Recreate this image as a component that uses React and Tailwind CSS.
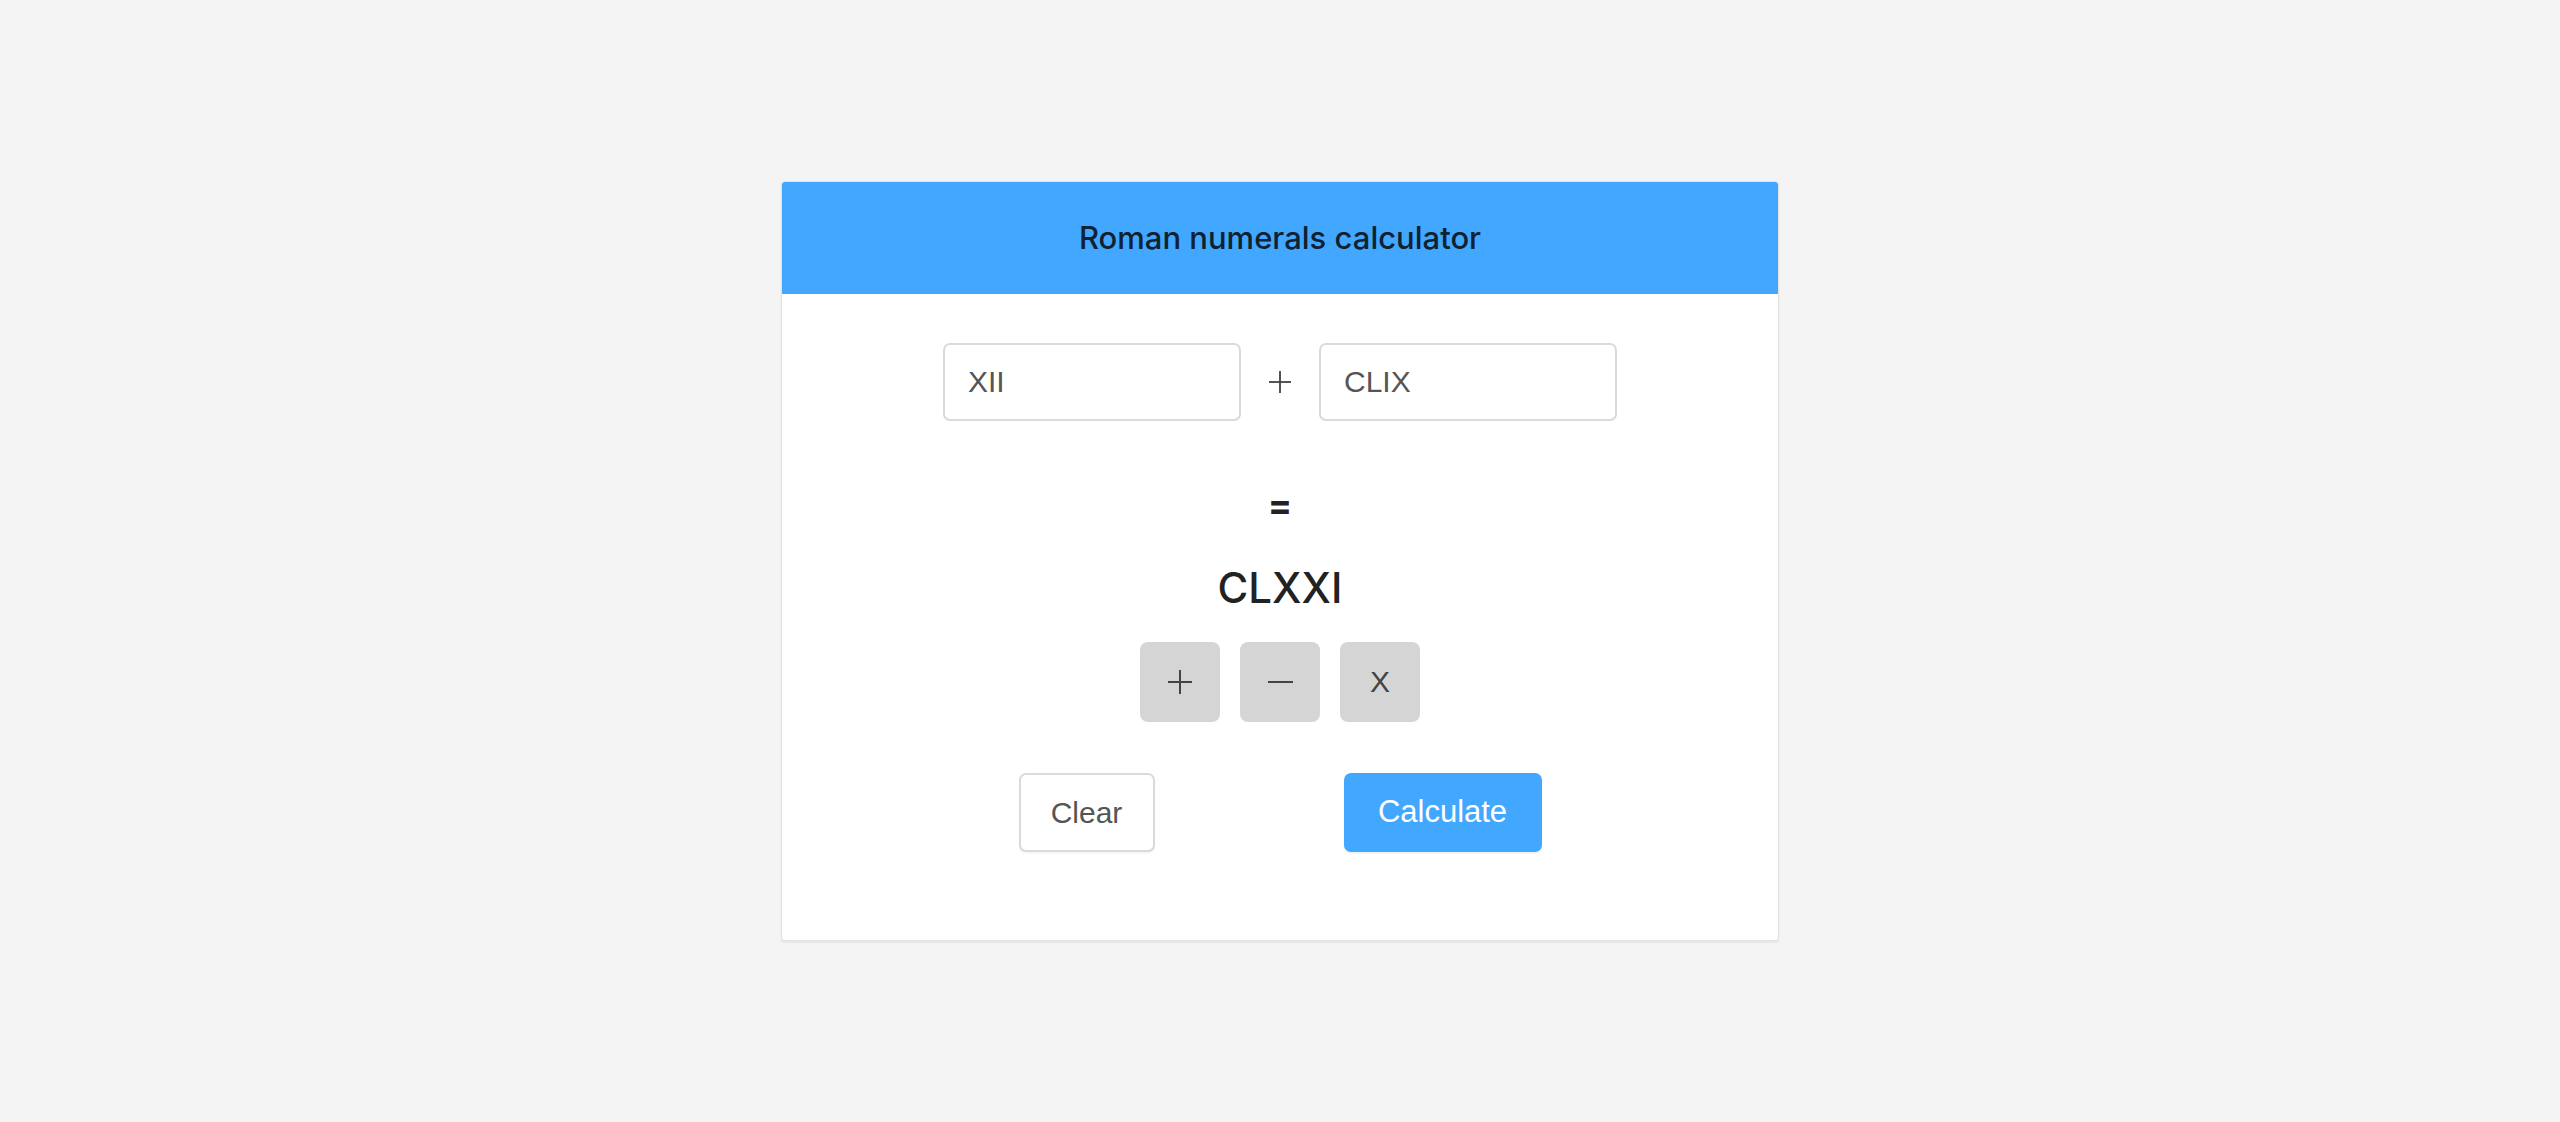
import { useState } from 'react'

function PlusIcon({ size = 24 }) {
  return (
    <svg width={size} height={size} viewBox="0 0 24 24" fill="none" stroke="#444" strokeWidth="2">
      <line x1="12" y1="0" x2="12" y2="24" />
      <line x1="0" y1="12" x2="24" y2="12" />
    </svg>
  )
}

function MinusIcon() {
  return (
    <svg width="25" height="24" viewBox="0 0 25 24" fill="none" stroke="#444" strokeWidth="2">
      <line x1="0" y1="12" x2="25" y2="12" />
    </svg>
  )
}

export default function App() {
  const [a, setA] = useState('XII')
  const [b, setB] = useState('CLIX')

  const opBtn = 'w-[80px] h-[80px] rounded-[8px] bg-[#d5d5d5] flex items-center justify-center'

  return (
    <div className="h-screen w-full bg-[#f4f4f4] flex items-center justify-center font-['Inter',sans-serif]">
      <div className="w-[998px] bg-white border border-[#e3e3e3] rounded-[4px] shadow-[0_2px_2px_rgba(0,0,0,0.06)] overflow-hidden">
        <div className="h-[112px] bg-[#42a7ff] flex items-center justify-center">
          <h1 className="text-[31px] font-medium text-[#102131]">Roman numerals calculator</h1>
        </div>

        <div className="flex flex-col items-center pt-[49px] pb-[88px]">
          <div className="flex items-center h-[78px]">
            <input
              value={a}
              onChange={e => setA(e.target.value)}
              className="w-[298px] h-[78px] border-2 border-[#dadada] rounded-[7px] px-[23px] text-[30px] text-[#555] font-['Liberation_Sans',Arial,sans-serif] outline-none"
            />
            <div className="w-[78px] flex items-center justify-center">
              <PlusIcon size={22} />
            </div>
            <input
              value={b}
              onChange={e => setB(e.target.value)}
              className="w-[298px] h-[78px] border-2 border-[#dadada] rounded-[7px] px-[23px] text-[30px] text-[#555] font-['Liberation_Sans',Arial,sans-serif] outline-none"
            />
          </div>

          <div className="mt-[62px] h-[45px] leading-[45px] text-[36px] font-bold text-[#222]">=</div>

          <div className="mt-[35px] h-[50px] leading-[50px] text-[42px] font-medium text-[#222]">CLXXI</div>

          <div className="mt-[29px] flex gap-[20px]">
            <button className={opBtn}><PlusIcon /></button>
            <button className={opBtn}><MinusIcon /></button>
            <button className={opBtn}>
              <span className="text-[30px] text-[#444] font-['Liberation_Sans',Arial,sans-serif] leading-none">X</span>
            </button>
          </div>

          <div className="mt-[51px] flex gap-[189px] font-['Liberation_Sans',Arial,sans-serif]">
            <button className="w-[136px] h-[79px] border-2 border-[#dadada] rounded-[7px] bg-white text-[30px] text-[#555] shadow-[0_2px_2px_rgba(0,0,0,0.04)]">
              Clear
            </button>
            <button className="w-[198px] h-[79px] rounded-[7px] bg-[#42a7ff] text-[31px] text-white shadow-[0_2px_2px_rgba(0,0,0,0.06)]">
              Calculate
            </button>
          </div>
        </div>
      </div>
    </div>
  )
}
